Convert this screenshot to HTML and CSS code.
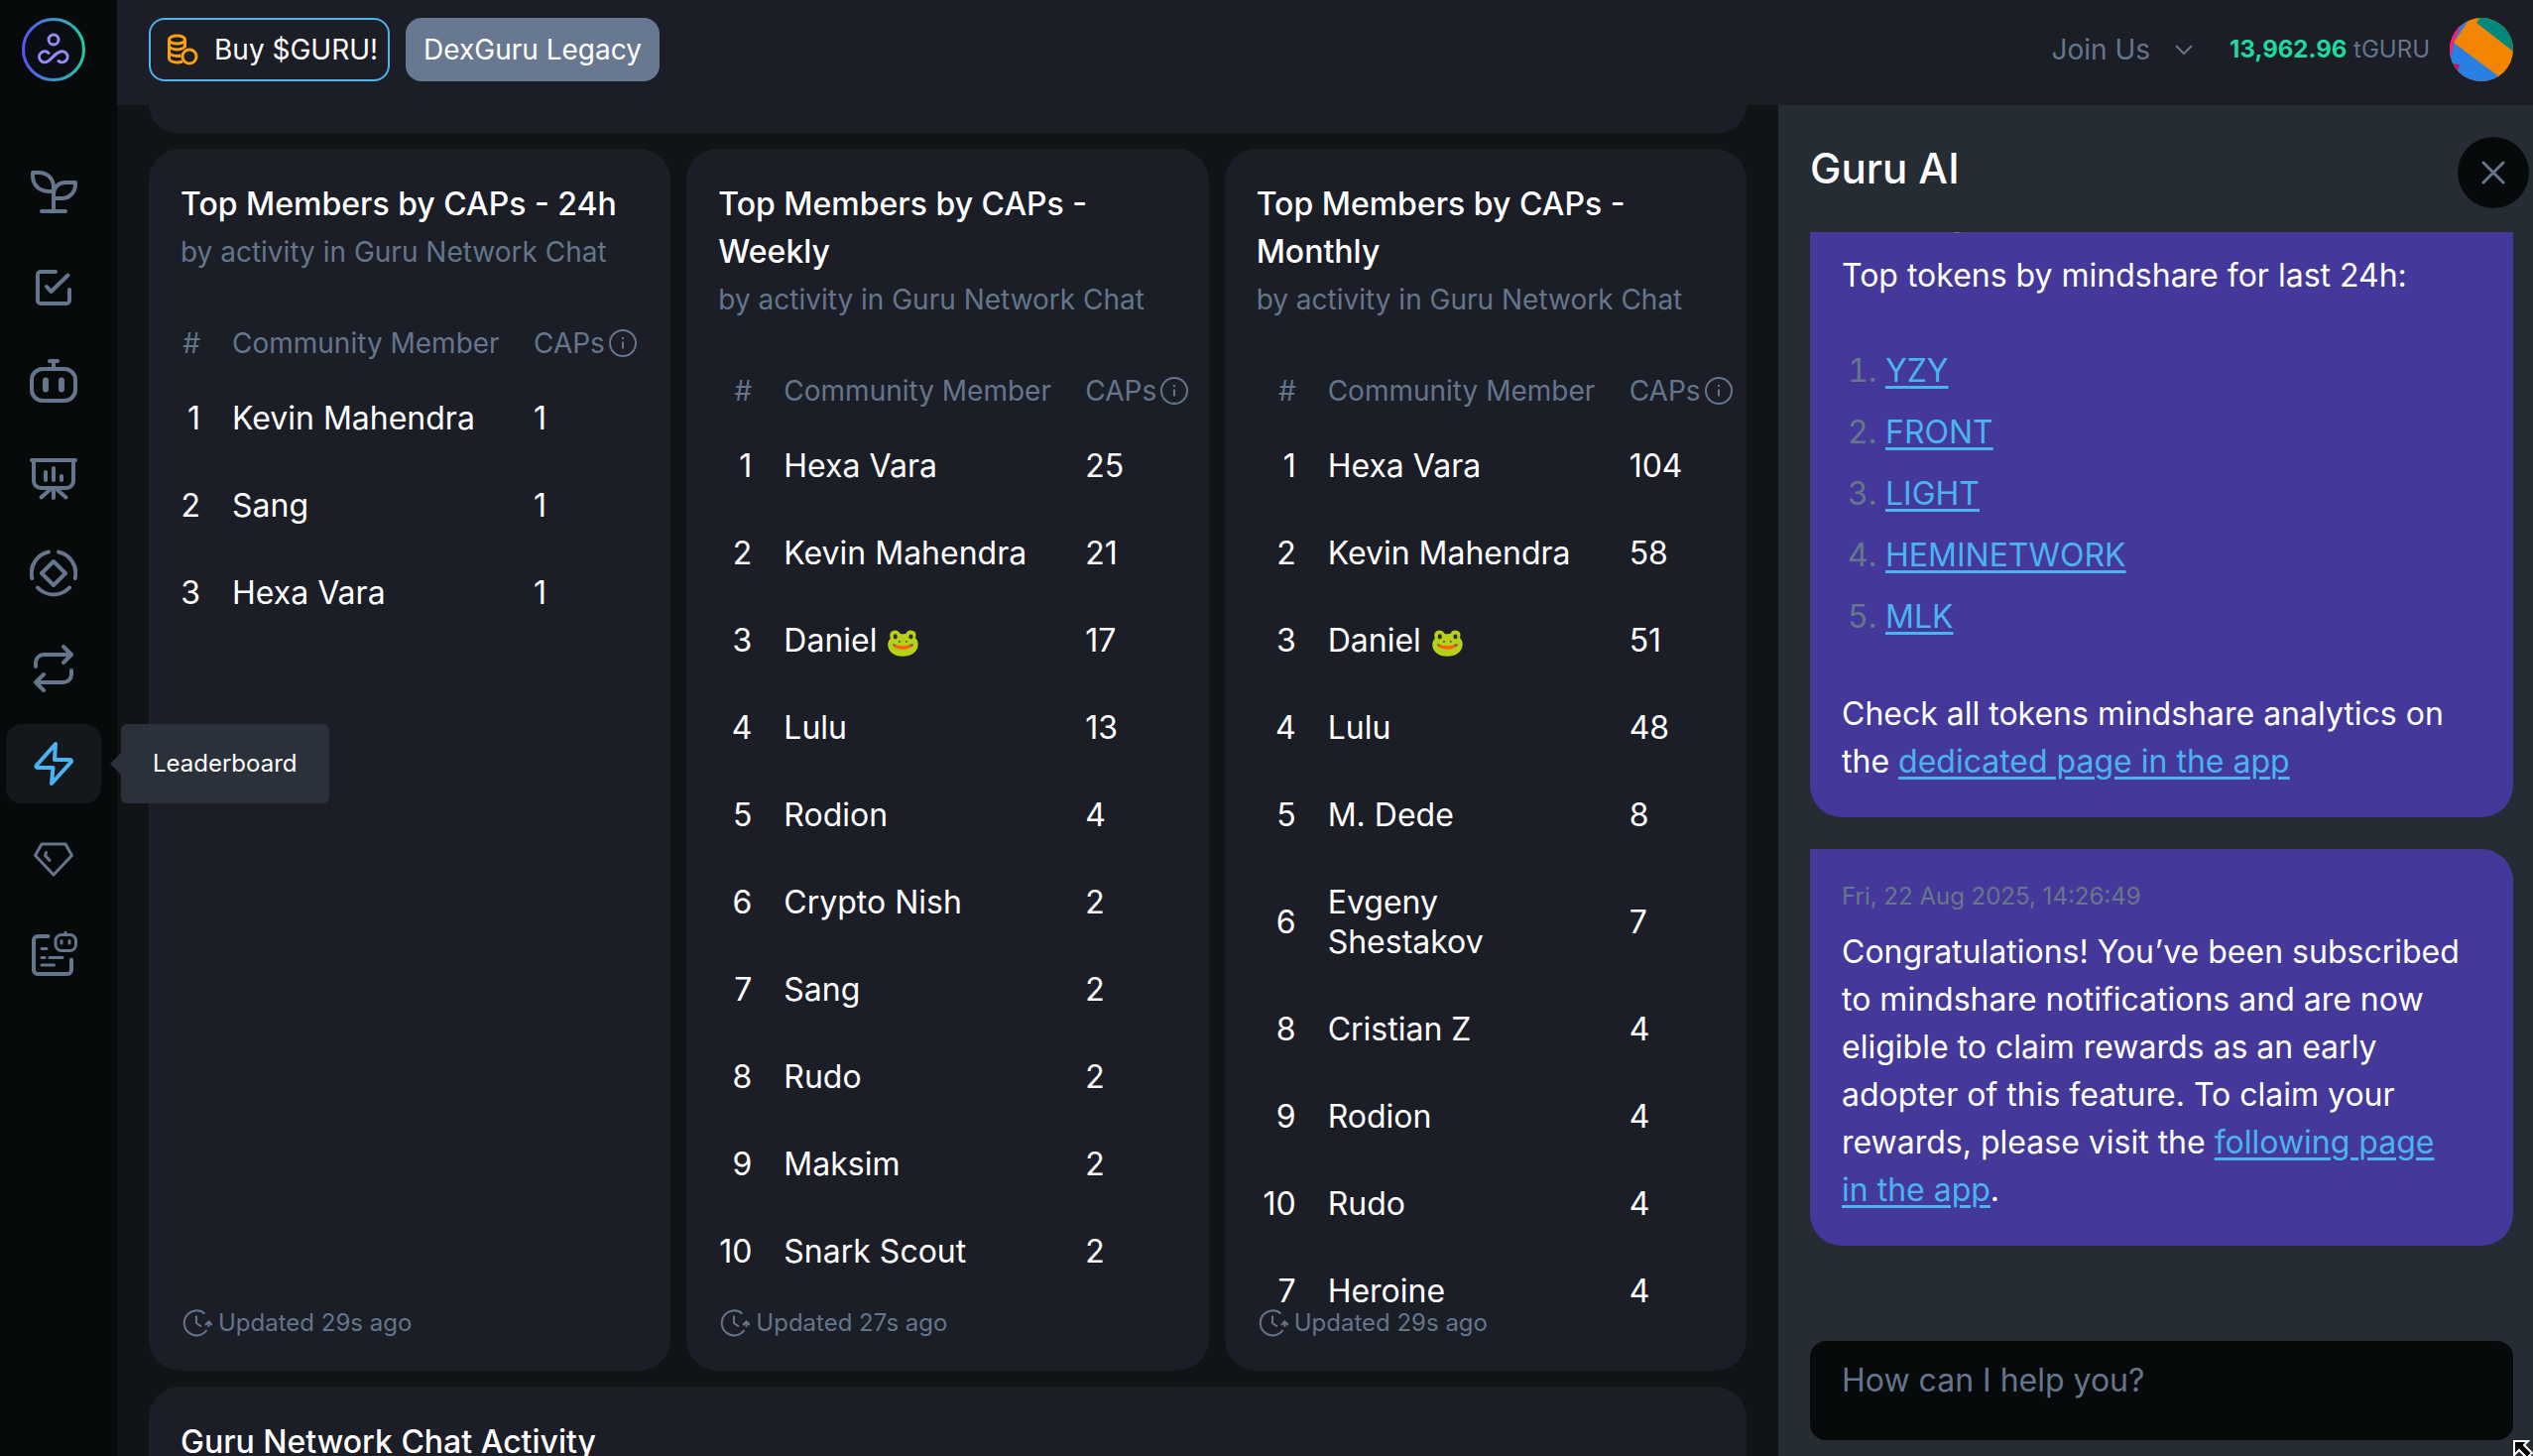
FILE: index.html
```html
<!DOCTYPE html>
<html lang="en">
<head>
<meta charset="utf-8">
<title>Guru Network – Leaderboard</title>
<link rel="stylesheet" href="styles.css">
</head>
<body>
<svg class="sprite" aria-hidden="true">
  <symbol id="info" viewBox="0 0 28 28"><circle cx="14" cy="14" r="13" fill="none" stroke="currentColor" stroke-width="2"/><path d="M14 12.500v7M14 8v2" fill="none" stroke="currentColor" stroke-width="2"/></symbol>
  <symbol id="clock" viewBox="0 0 30 28"><path d="M22.500 4.500A12.500 12.500 0 1 0 24.500 21M14 6.500V14l5 3.500M26.500 18v-5M23 16l3.500-3.500L30 16" fill="none" stroke="currentColor" stroke-width="2"/></symbol>
</svg>
<div class="app">
  <aside class="sidebar">
    <a class="logo" href="#" aria-label="Guru Network">
      <svg viewBox="0 0 64 64">
        <defs><linearGradient id="ring"><stop offset="0" stop-color="#5b55f5"/><stop offset="1" stop-color="#22c9a4"/></linearGradient></defs>
        <circle cx="32" cy="32" r="30.500" fill="#080e11" stroke="url(#ring)" stroke-width="3"/>
        <g fill="none" stroke="#9a88f5" stroke-width="3" stroke-linecap="round"><circle cx="32" cy="22" r="5"/><path d="M27 35.500a5.500 5.500 0 1 0-1 8.500c5-3 7-8 12-9.500a5.500 5.500 0 1 1-1 9"/></g>
      </svg>
    </a>
    <nav class="nav" aria-label="Main">
      <a class="nav-item" href="#" aria-label="Farming"><svg viewBox="0 0 48 48"><path d="M3 4h6c9 0 15 6 15 15v4h-4C10 23 3 17 3 7zM24 30v-4c0-7 5-12 12-12h10v2c0 8-6 14-14 14zM24 20v22M12 43h24"/></svg></a>
      <a class="nav-item" href="#" aria-label="Quests"><svg viewBox="0 0 48 48"><path d="M26 8H11a3 3 0 0 0-3 3v26a3 3 0 0 0 3 3h26a3 3 0 0 0 3-3V26M17 23l4.500 5 17-16.500"/></svg></a>
      <a class="nav-item" href="#" aria-label="Bots"><svg viewBox="0 0 48 48"><rect x="2" y="10" width="44" height="32" rx="11"/><path d="M20 2h8M24 2v8"/><path class="thick" d="M16 21.500v9M32 21.500v9"/></svg></a>
      <a class="nav-item" href="#" aria-label="Analytics"><svg viewBox="0 0 48 48"><path d="M2 6h44M4 6v21a7 7 0 0 0 7 7h26a7 7 0 0 0 7-7V6M16 18v8M24 14v12M32 22v4M24 35v9M20 36l-8.500 7.500M28 36l8.500 7.500"/></svg></a>
      <a class="nav-item" href="#" aria-label="Tokens"><svg viewBox="0 0 48 48"><path d="M24 12l12 12-12 12-12-12zM2.300 29A22 22 0 0 1 19 2.500M45.700 29A22 22 0 0 0 29 2.500M8 38.500a22 22 0 0 0 32 0"/></svg></a>
      <a class="nav-item" href="#" aria-label="Swap"><svg viewBox="0 0 48 48"><path d="M6 22v-4a8 8 0 0 1 8-8h28M34 2l8 8-8 8M42 26v4a8 8 0 0 1-8 8H6M14 30l-8 8 8 8"/></svg></a>
      <a class="nav-item active" href="#" aria-label="Leaderboard"><svg viewBox="0 0 48 48"><path d="M26 4L7 25.500c-1 1-.5 2.500 1 2.500h15.500L22 44l19.500-21.500c1-1 .5-2.500-1-2.500H25z"/></svg><span class="tooltip" role="tooltip">Leaderboard</span></a>
      <a class="nav-item" href="#" aria-label="Rewards"><svg viewBox="0 0 48 48"><path class="thin" d="M12 9h24l6.500 11.500L24 40 5.500 20.500zM16.500 17.500l-1 3 4.500 5"/></svg></a>
      <a class="nav-item" href="#" aria-label="Bot logs"><svg viewBox="0 0 48 48"><path d="M18.500 6H8a4 4 0 0 0-4 4v30a4 4 0 0 0 4 4h30a4 4 0 0 0 4-4V29.500"/><g class="thin"><rect x="26" y="4.500" width="20.500" height="16" rx="6"/><path d="M36 2v2M32 10.500v2.500M40 10.500v2.500M12 18.500h5M12 27.500h3M20 27.500h13M12 35h12.500"/></g></svg></a>
    </nav>
  </aside>

  <div class="page">
    <header class="topbar">
      <button class="btn btn-outline" type="button">
        <svg viewBox="0 0 32 32"><ellipse cx="10.500" cy="6" rx="8" ry="4"/><path d="M2.500 6v19c0 2 3.500 4 8 4 2 0 4-.500 5.500-1M18.500 6v8M2.500 12c0 2 3.500 4 8 4s8-2 8-4M2.500 18.500c0 2 3.500 4 8 4 1.500 0 3-.200 4-.500"/><circle cx="23" cy="23" r="7"/></svg>
        Buy $GURU!
      </button>
      <button class="btn btn-solid" type="button">DexGuru Legacy</button>
      <button class="join" type="button">Join Us <svg viewBox="0 0 20 12"><path d="M2 2l8 8 8-8"/></svg></button>
      <p class="balance"><strong>13,962.96</strong> tGURU</p>
      <svg class="avatar" viewBox="0 0 64 64" role="img" aria-label="Profile"><defs><clipPath id="round"><circle cx="32" cy="32" r="32"/></clipPath></defs><g clip-path="url(#round)"><path fill="#f48502" d="M0 0h64v64H0z"/><path fill="#00897b" d="M32-2l-5 7 40 31V-2z"/><path fill="#2880e3" d="M4 25l48 36-2 4H0V20zM22-2L4 25l4-14z"/><path fill="#fb1977" d="M12 6L5 22l-4 18h-2V6z"/><path fill="#c8145f" d="M2 46l8 1-2 7z"/></g></svg>
    </header>

    <div class="content">
      <main class="board">
        <section class="card card-previous" aria-hidden="true"></section>
        <div class="cards">
          <section class="card">
            <h2>Top Members by CAPs - 24h</h2>
            <p class="sub">by activity in Guru Network Chat</p>
            <table class="rank-day">
              <thead><tr><th class="num">#</th><th class="who">Community Member</th><th><span class="caps">CAPs <svg><use href="#info"/></svg></span></th></tr></thead>
              <tbody>
                <tr><td class="num">1</td><td>Kevin Mahendra</td><td>1</td></tr>
                <tr><td class="num">2</td><td>Sang</td><td>1</td></tr>
                <tr><td class="num">3</td><td>Hexa Vara</td><td>1</td></tr>
              </tbody>
            </table>
            <p class="updated"><svg><use href="#clock"/></svg>Updated 29s ago</p>
          </section>
          <section class="card">
            <h2>Top Members by CAPs - Weekly</h2>
            <p class="sub">by activity in Guru Network Chat</p>
            <table class="rank-week">
              <thead><tr><th class="num">#</th><th class="who">Community Member</th><th><span class="caps">CAPs <svg><use href="#info"/></svg></span></th></tr></thead>
              <tbody>
                <tr><td class="num">1</td><td>Hexa Vara</td><td>25</td></tr>
                <tr><td class="num">2</td><td>Kevin Mahendra</td><td>21</td></tr>
                <tr><td class="num">3</td><td>Daniel <span class="emoji">🐸</span></td><td>17</td></tr>
                <tr><td class="num">4</td><td>Lulu</td><td>13</td></tr>
                <tr><td class="num">5</td><td>Rodion</td><td>4</td></tr>
                <tr><td class="num">6</td><td>Crypto Nish</td><td>2</td></tr>
                <tr><td class="num">7</td><td>Sang</td><td>2</td></tr>
                <tr><td class="num">8</td><td>Rudo</td><td>2</td></tr>
                <tr><td class="num">9</td><td>Maksim</td><td>2</td></tr>
                <tr><td class="num">10</td><td>Snark Scout</td><td>2</td></tr>
              </tbody>
            </table>
            <p class="updated"><svg><use href="#clock"/></svg>Updated 27s ago</p>
          </section>
          <section class="card">
            <h2>Top Members by CAPs - Monthly</h2>
            <p class="sub">by activity in Guru Network Chat</p>
            <table class="rank-month">
              <thead><tr><th class="num">#</th><th class="who">Community Member</th><th><span class="caps">CAPs <svg><use href="#info"/></svg></span></th></tr></thead>
              <tbody>
                <tr><td class="num">1</td><td>Hexa Vara</td><td>104</td></tr>
                <tr><td class="num">2</td><td>Kevin Mahendra</td><td>58</td></tr>
                <tr><td class="num">3</td><td>Daniel <span class="emoji">🐸</span></td><td>51</td></tr>
                <tr><td class="num">4</td><td>Lulu</td><td>48</td></tr>
                <tr><td class="num">5</td><td>M. Dede</td><td>8</td></tr>
                <tr><td class="num">6</td><td>Evgeny Shestakov</td><td>7</td></tr>
                <tr><td class="num">8</td><td>Cristian Z</td><td>4</td></tr>
                <tr><td class="num">9</td><td>Rodion</td><td>4</td></tr>
                <tr><td class="num">10</td><td>Rudo</td><td>4</td></tr>
                <tr><td class="num">7</td><td>Heroine</td><td>4</td></tr>
              </tbody>
            </table>
            <p class="updated"><svg><use href="#clock"/></svg>Updated 29s ago</p>
          </section>
        </div>
        <section class="card"><h2>Guru Network Chat Activity</h2></section>
      </main>

      <aside class="chat">
        <header class="chat-head">
          <h1>Guru AI</h1>
          <button class="close" type="button" aria-label="Close chat"><svg viewBox="0 0 24 24"><path d="M2 2l20 20M22 2L2 22"/></svg></button>
        </header>
        <div class="messages">
          <article class="bubble">
            <time>Fri, 22 Aug 2025, 14:26:46</time>
            <p>Top tokens by mindshare for last 24h:</p>
            <ol>
              <li><a href="#">YZY</a></li>
              <li><a href="#">FRONT</a></li>
              <li><a href="#">LIGHT</a></li>
              <li><a href="#">HEMINETWORK</a></li>
              <li><a href="#">MLK</a></li>
            </ol>
            <p>Check all tokens mindshare analytics on the <a href="#">dedicated page in the app</a></p>
          </article>
          <article class="bubble">
            <time>Fri, 22 Aug 2025, 14:26:49</time>
            <p>Congratulations! You’ve been subscribed to mindshare notifications and are now eligible to claim rewards as an early adopter of this feature. To claim your rewards, please visit the <a href="#">following page <span class="keep">in the app</span></a>.</p>
          </article>
        </div>
        <form class="ask"><textarea aria-label="Message" placeholder="How can I help you?"></textarea></form>
      </aside>
    </div>
  </div>
</div>
<svg class="cursor" viewBox="0 0 20 16" aria-hidden="true"><path d="M1 1h14l-4 4 8 8-5 5-8-8-5 5z" fill="#000" stroke="#fff" stroke-width="2"/></svg>
</body>
</html>
```
FILE: styles.css
```css
:root {
  --side: #070a0b;
  --bg: #101417;
  --surface: #1b1e26;
  --panel: #262c33;
  --bubble: #44399a;
  --muted: #65758b;
  --link: #4ab3f0;
}
* { box-sizing: border-box; }
body {
  margin: 0;
  background: var(--bg);
  color: #fff;
  font-family: Inter, "Noto Sans", sans-serif;
  font-size: 32px;
  line-height: 48px;
}
h1, h2, p, ol { margin: 0; }
button { font: inherit; border: 0; cursor: pointer; }
svg { display: block; flex: none; }
.sprite { display: none; }

.app { display: flex; height: 100vh; overflow: hidden; }

.sidebar {
  flex: none;
  width: 118px;
  padding: 18px 16px 0 6px;
  background: var(--side);
}
.logo { display: block; width: 64px; margin: 0 auto 72px; }
.nav { display: flex; flex-direction: column; gap: 16px; }
.nav-item {
  position: relative;
  display: flex;
  align-items: center;
  justify-content: center;
  height: 80px;
  border-radius: 16px;
  color: var(--muted);
  text-decoration: none;
}
.nav-item svg {
  width: 48px;
  height: 48px;
  fill: none;
  stroke: currentColor;
  stroke-width: 4;
  stroke-linecap: round;
  stroke-linejoin: round;
}
.nav-item .thick { stroke-width: 6; }
.nav-item .thin { stroke-width: 3; }
.nav-item.active { background: #14181c; color: var(--link); }
.tooltip {
  position: absolute;
  left: 116px;
  top: 0;
  z-index: 2;
  padding: 16px 32px;
  border-radius: 6px;
  background: #2b313b;
  color: #fff;
  font-size: 24px;
}
.tooltip::before {
  content: "";
  position: absolute;
  left: -11px;
  top: 29px;
  border: 11px solid transparent;
  border-left: 0;
  border-right-color: #2b313b;
}

.page { flex: 1; min-width: 0; display: flex; flex-direction: column; }
.topbar {
  flex: none;
  display: flex;
  align-items: center;
  gap: 16px;
  padding: 18px 20px 24px 32px;
  background: var(--surface);
  font-size: 28px;
}
.btn {
  display: flex;
  align-items: center;
  gap: 16px;
  height: 64px;
  padding: 0 18px;
  border-radius: 16px;
  color: #fff;
}
.btn-outline { padding: 0 10px 0 16px; border: 2px solid var(--link); background: none; }
.btn-outline svg { width: 32px; height: 32px; fill: none; stroke: #fc9f13; stroke-width: 3; }
.btn-solid { background: #687890; }
.join {
  display: flex;
  align-items: center;
  gap: 24px;
  margin-left: auto;
  padding: 0;
  background: none;
  color: var(--muted);
}
.join svg { width: 20px; height: 12px; fill: none; stroke: currentColor; stroke-width: 2; }
.balance { margin-left: 20px; color: var(--muted); font-size: 24px; }
.balance strong { color: #20d9a0; }
.avatar { width: 64px; height: 64px; margin-left: 4px; }

.content { flex: 1; min-height: 0; display: flex; }
.board {
  flex: 1;
  min-width: 0;
  display: flex;
  flex-direction: column;
  gap: 16px;
  padding: 0 32px;
  overflow: hidden;
}
.cards { flex: none; display: grid; grid-template-columns: repeat(3, minmax(0, 1fr)); gap: 16px; }
.card {
  position: relative;
  flex: none;
  padding: 32px 32px 36px;
  border-radius: 32px;
  background: var(--surface);
}
.card-previous { padding: 0; height: 28px; border-radius: 0 0 32px 32px; }
.card h2 { font-size: 32px; font-weight: 500; }
.sub { color: var(--muted); font-size: 28px; white-space: nowrap; }

table { width: 100%; margin-top: 36px; border-collapse: collapse; table-layout: fixed; line-height: 40px; }
th, td { padding: 24px 0; text-align: left; }
th { padding: 12px 0; color: var(--muted); font-size: 28px; font-weight: 400; white-space: nowrap; }
.num { text-align: right; }
td.num + td, .who { padding-left: 32px; padding-right: 32px; }
.who { width: 336px; }
.rank-day .num { width: 20px; }
.rank-week .num { width: 34px; }
.rank-month .num { width: 40px; }
td.num { white-space: nowrap; }
.caps { display: flex; align-items: center; gap: 4px; }
.caps svg { width: 28px; height: 28px; }
.emoji { font-size: 28px; line-height: 1; }
.updated {
  position: absolute;
  left: 34px;
  bottom: 24px;
  display: flex;
  align-items: center;
  gap: 6px;
  color: var(--muted);
  font-size: 24px;
}
.updated svg { width: 30px; height: 28px; }

.chat {
  flex: none;
  width: 761px;
  display: flex;
  flex-direction: column;
  padding: 0 20px 16px 32px;
  background: var(--panel);
}
.chat-head {
  flex: none;
  display: flex;
  justify-content: space-between;
  align-items: center;
  height: 128px;
  margin-right: -16px;
}
.chat-head h1 { font-size: 42px; font-weight: 500; }
.close {
  display: flex;
  align-items: center;
  justify-content: center;
  width: 72px;
  height: 72px;
  margin-top: 8px;
  border-radius: 50%;
  background: var(--side);
  color: var(--muted);
}
.close svg { width: 24px; height: 24px; fill: none; stroke: currentColor; stroke-width: 3; stroke-linecap: round; }
.messages {
  flex: 1;
  min-height: 0;
  display: flex;
  flex-direction: column;
  justify-content: flex-end;
  gap: 32px;
  padding-bottom: 96px;
  overflow: hidden;
}
.bubble { flex: none; padding: 32px; border-radius: 0 32px 32px 32px; background: var(--bubble); }
.bubble time { display: block; margin-bottom: 16px; color: #67778a; font-size: 24px; line-height: 32px; }
.bubble a { color: var(--link); text-decoration-thickness: 3px; text-underline-offset: 4px; }
.bubble ol { display: grid; gap: 14px; margin: 48px 0 50px; padding-left: 44px; }
.bubble li::marker { color: #67778a; }
.keep { white-space: nowrap; }
.ask { flex: none; display: flex; }
.ask textarea {
  flex: 1;
  height: 100px;
  padding: 16px 32px;
  border: 0;
  border-radius: 16px;
  background: var(--side);
  color: #fff;
  font: inherit;
  resize: none;
}
.ask textarea::placeholder { color: var(--muted); opacity: 1; }
.cursor { position: fixed; right: 0; bottom: 0; width: 20px; height: 16px; }
```
